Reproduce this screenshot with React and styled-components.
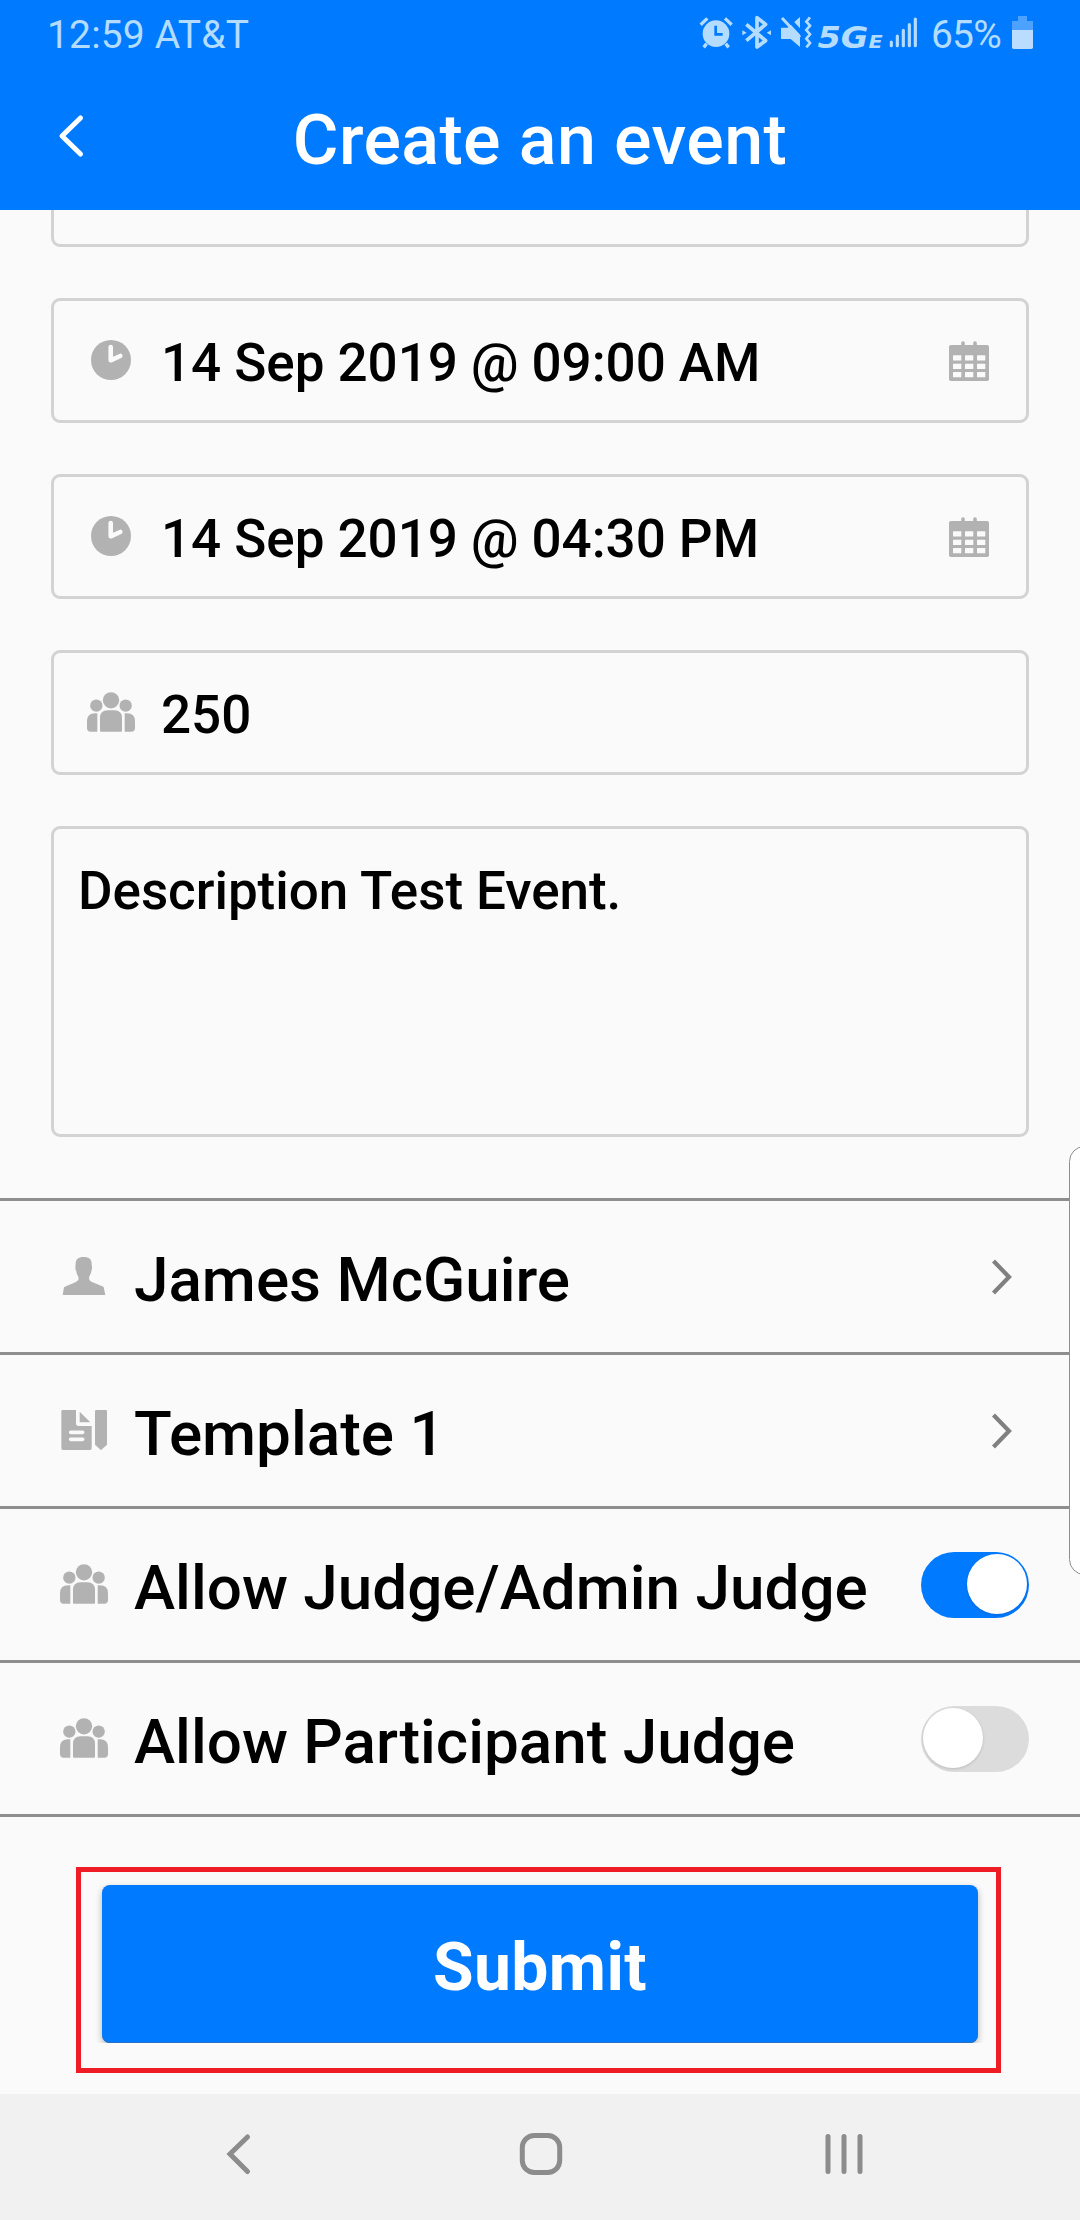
import React, { useState } from 'react';
import styled, { createGlobalStyle } from 'styled-components';

const GlobalStyle = createGlobalStyle`
  * {
    box-sizing: border-box;
  }
  body {
    margin: 0;
    background-color: #fafafa;
    font-family: Roboto, "Liberation Sans", sans-serif;
  }
`;

const Screen = styled.div`
  position: relative;
  display: flex;
  flex-direction: column;
  width: 1080px;
  height: 2220px;
  overflow: hidden;
  background-color: #fafafa;
  color: #000;
`;

const Header = styled.header`
  flex: none;
  height: 210px;
  background-color: #007aff;
  color: #fff;
`;

const StatusBar = styled.div`
  display: flex;
  justify-content: space-between;
  height: 70px;
  padding: 15px 47px 0 47px;
  color: #b3dcff;
  font-size: 39px;
  line-height: 41px;
  white-space: nowrap;

  svg {
    display: block;
    flex: none;
  }
`;

const Carrier = styled.span`
  letter-spacing: 0.15px;
`;

const StatusIcons = styled.div`
  display: flex;
  align-items: flex-start;

  .alarm {
    margin-right: 8px;
  }
  .bluetooth {
    margin-right: 7px;
  }
`;

const Network = styled.span`
  width: 76px;
  padding: 7px 0 0 4px;
  font: italic bold 30px/32px "DejaVu Sans", sans-serif;
  transform: scaleX(1.12);
  transform-origin: left;

  small {
    font-size: 18.5px;
  }
`;

const Percent = styled.span`
  width: 94px;
  padding-left: 13px;
  letter-spacing: -0.8px;
`;

const TitleBar = styled.div`
  display: grid;
  grid-template-columns: 140px 1fr 140px;
  align-items: center;
  height: 140px;
`;

const BackButton = styled.button`
  display: flex;
  padding: 0 0 8px 56px;
  border: 0;
  background: none;
  color: #fff;
`;

const Title = styled.h1`
  margin: 0;
  text-align: center;
  font-size: 70px;
  font-weight: 500;
  line-height: 84px;
  letter-spacing: 0.4px;
  white-space: nowrap;
`;

const Content = styled.main`
  flex: 1;
  min-height: 0;
  overflow: hidden;
`;

const Fields = styled.div`
  display: flex;
  flex-direction: column;
  gap: 51px;
  margin-top: -88px;
  padding: 0 51px;
`;

const Field = styled.div`
  display: flex;
  align-items: ${props => (props.$multiline ? 'flex-start' : 'center')};
  height: ${props => (props.$multiline ? '311px' : '125px')};
  padding: ${props => (props.$multiline ? '30px 24px' : '0 37px 0 33px')};
  border: 3px solid #d3d3d3;
  border-radius: 9px;
  font-size: 53px;
  font-weight: 500;
  line-height: 64px;
  letter-spacing: -0.05px;
  white-space: nowrap;

  svg {
    flex: none;
    color: #b2b2b2;
  }
  svg:first-child {
    margin-bottom: 1px;
  }
  svg:last-child {
    margin-top: 1px;
  }
`;

const FieldText = styled.span`
  flex: 1;
  padding: 5px 0 0 26px;
`;

const List = styled.div`
  margin-top: 61px;
  border-bottom: 3px solid #8e8e8e;
`;

const Row = styled.div`
  display: flex;
  align-items: center;
  height: 154px;
  padding: 0 51px 0 60px;
  border-top: 3px solid #8e8e8e;

  svg {
    flex: none;
    color: #b2b2b2;
  }
  svg:first-child {
    margin-bottom: 1px;
  }
  .chevron {
    margin-right: 15px;
    color: #808080;
  }
`;

const RowText = styled.span`
  flex: 1;
  padding: 6px 0 0 26px;
  font-size: 62px;
  font-weight: 500;
  line-height: 74px;
  white-space: nowrap;
`;

const Switch = styled.button`
  display: flex;
  justify-content: ${props => (props.$on ? 'flex-end' : 'flex-start')};
  width: 108px;
  height: 66px;
  margin-top: 1px;
  padding: 2px 2px 4px;
  border: 0;
  border-radius: 33px;
  background-color: ${props => (props.$on ? '#007aff' : '#dcdcdc')};
`;

const Knob = styled.span`
  width: 60px;
  height: 60px;
  border-radius: 50%;
  background-color: #fff;
  box-shadow: 0 1px 3px rgba(0, 0, 0, 0.15);
`;

const SubmitFrame = styled.div`
  width: 925px;
  height: 206px;
  margin: 50px 0 0 76px;
  padding: 13px 18px 25px 21px;
  border: 5px solid #ee1c24;
`;

const SubmitButton = styled.button`
  display: block;
  width: 100%;
  height: 158px;
  padding: 7px 0 0;
  border: 0;
  border-radius: 8px;
  background-color: #007aff;
  box-shadow: 0 3px 7px rgba(0, 0, 0, 0.28), inset 0 -1px 0 #2a70c4;
  clip-path: inset(-8px -16px 0 -16px);
  color: #fff;
  font-family: inherit;
  font-size: 66px;
  font-weight: 700;
  letter-spacing: 0.4px;
`;

const NavBar = styled.nav`
  display: flex;
  flex: none;
  align-items: center;
  justify-content: space-between;
  height: 126px;
  padding: 0 214px 6px 223px;
  background-color: #f1f1f1;
  color: #8c8c8c;

  .home {
    margin-left: 7px;
  }
`;

/* pull-out handle of the edge panel, cut off by the screen border */
const EdgeHandle = styled.div`
  position: absolute;
  top: 1146px;
  right: -20px;
  width: 31px;
  height: 429px;
  border: 1px solid #8e8e8e;
  border-radius: 16px;
  background-color: #fff;
`;

const AlarmIcon = () => (
  <svg className="alarm" width="35" height="35" viewBox="57 45 105 105">
    <g stroke="currentColor" strokeWidth="10" fill="none">
      <path d="M62 74L82 55M155 74L135 55" />
      <path d="M80 131L71 142M137 131L146 142" />
    </g>
    <circle cx="108" cy="101" r="40" fill="currentColor" />
    <path d="M107 77V103H128" fill="none" stroke="#007aff" strokeWidth="8" />
  </svg>
);

const BluetoothIcon = () => (
  <svg className="bluetooth" width="30" height="35" viewBox="186 45 90 105">
    <path d="M199 73L257 122L231 141V53L257 73L199 122" fill="none" stroke="currentColor" strokeWidth="11" strokeLinejoin="round" />
    <path d="M187 91L200 98L187 106ZM273 91L260 98L273 106Z" fill="currentColor" />
  </svg>
);

const MuteIcon = () => (
  <svg width="34" height="35" viewBox="297 45 102 105">
    <path d="M303 83H323L342 67L360 51V141L332 117H303Z" fill="currentColor" />
    <path d="M314 45L370 105" stroke="#007aff" strokeWidth="13" />
    <path d="M306 54L360 112" stroke="currentColor" strokeWidth="9" />
    <path d="M390 52L379 65L390 77L379 90L390 103L379 116L390 129L379 142" fill="none" stroke="currentColor" strokeWidth="8" />
  </svg>
);

const SignalIcon = () => (
  <svg width="29" height="35" viewBox="627 45 87 105">
    <path d="M634 126V137M652 108V137M670 91V137M688 74V137M706 57V137" stroke="currentColor" strokeWidth="9.5" strokeLinecap="round" />
  </svg>
);

const BatteryIcon = () => (
  <svg width="21" height="35" viewBox="996 45 63 105">
    <path d="M1014 48H1041V63H1059V90H996V63H1014Z" fill="#4da2ff" />
    <path d="M996 90H1059V142Q1059 147 1054 147H1001Q996 147 996 142Z" fill="#b9dcff" />
  </svg>
);

const ClockIcon = () => (
  <svg width="48" height="40" viewBox="-4 0 48 40">
    <circle cx="20" cy="20" r="20" fill="currentColor" />
    <path d="M19.7 7V20.3L29.3 16" fill="none" stroke="#fafafa" strokeWidth="4.6" strokeLinecap="round" strokeLinejoin="round" />
  </svg>
);

const CalendarIcon = () => (
  <svg width="40" height="40" viewBox="0 0 40 40">
    <path d="M14 2V8M26 2V8" stroke="currentColor" strokeWidth="3.6" strokeLinecap="round" />
    <rect y="4" width="40" height="36" rx="1.8" fill="currentColor" />
    <g fill="#fafafa">
      {[14.3, 22.8, 31].map(y => [4, 16, 28].map(x => (
        <rect key={`${x}-${y}`} x={x} y={y} width="8.3" height="5.2" rx="0.5" />
      )))}
    </g>
  </svg>
);

const PeopleIcon = () => (
  <svg width="48" height="40" viewBox="0 0 144 120" fill="currentColor">
    <circle cx="72" cy="25" r="24.5" />
    <circle cx="28" cy="41" r="18.5" />
    <circle cx="116" cy="41" r="18.5" />
    <path d="M39 117V78Q39 55 62 55H82Q105 55 105 78V117Q105 119 102 119H42Q39 119 39 117Z" />
    <path d="M31 64V119H11Q0 119 0 108V88Q0 64 24 64Z" />
    <path d="M113 64V119H133Q144 119 144 108V88Q144 64 120 64Z" />
  </svg>
);

const PersonIcon = () => (
  <svg width="48" height="38" viewBox="60 201 144 114">
    <path d="M131 201C148 201 155 208 155 222C156 230 157 237 154 244C153 253 147 258 147 265C148 274 157 277 165 280C176 284 183 288 191 291L196 315H68L72 292C83 286 91 284 101 279C110 275 116 273 116 265C115 258 110 254 109 244C105 237 106 230 107 222C107 208 114 201 131 201Z" fill="currentColor" />
  </svg>
);

const TemplateIcon = () => (
  <svg width="48" height="40" viewBox="60 660 144 120">
    <path d="M68 660H108V700Q108 708 116 708H155V775Q155 780 150 780H69Q64 780 64 775V664Q64 660 68 660Z" fill="currentColor" />
    <path d="M119 665L151 697H119Z" fill="currentColor" />
    <path d="M169 660H197Q201 660 201 664V764L186 778Q183 781 180 778L165 764V664Q165 660 169 660Z" fill="currentColor" />
    <path d="M92 727H128M92 748H128" stroke="#fafafa" strokeWidth="11" strokeLinecap="round" />
  </svg>
);

const ChevronIcon = () => (
  <svg className="chevron" width="24" height="36" viewBox="0 0 24 36">
    <path d="M3.5 2L19 18L3.5 34" fill="none" stroke="currentColor" strokeWidth="4.2" />
  </svg>
);

const dates = ['14 Sep 2019 @ 09:00 AM', '14 Sep 2019 @ 04:30 PM'];

function SwitchRow({ label, initial }) {
  const [on, setOn] = useState(initial);

  return (
    <Row>
      <PeopleIcon />
      <RowText>{label}</RowText>
      <Switch $on={on} role="switch" aria-checked={on} onClick={() => setOn(prev => !prev)}>
        <Knob />
      </Switch>
    </Row>
  );
}

function App() {
  return (
    <Screen>
      <GlobalStyle />
      <Header>
        <StatusBar>
          <Carrier>12:59 AT&amp;T</Carrier>
          <StatusIcons>
            <AlarmIcon />
            <BluetoothIcon />
            <MuteIcon />
            <Network>5G<small>E</small></Network>
            <SignalIcon />
            <Percent>65%</Percent>
            <BatteryIcon />
          </StatusIcons>
        </StatusBar>
        <TitleBar>
          <BackButton>
            <svg width="30" height="44" viewBox="0 0 30 44">
              <path d="M24.5 4L6 22L24.5 40" fill="none" stroke="currentColor" strokeWidth="5" strokeLinecap="round" strokeLinejoin="round" />
            </svg>
          </BackButton>
          <Title>Create an event</Title>
        </TitleBar>
      </Header>

      <Content>
        <Fields>
          <Field />
          {dates.map(date => (
            <Field key={date}>
              <ClockIcon />
              <FieldText>{date}</FieldText>
              <CalendarIcon />
            </Field>
          ))}
          <Field>
            <PeopleIcon />
            <FieldText>250</FieldText>
          </Field>
          <Field $multiline>Description Test Event.</Field>
        </Fields>

        <List>
          <Row>
            <PersonIcon />
            <RowText>James McGuire</RowText>
            <ChevronIcon />
          </Row>
          <Row>
            <TemplateIcon />
            <RowText>Template 1</RowText>
            <ChevronIcon />
          </Row>
          <SwitchRow label="Allow Judge/Admin Judge" initial={true} />
          <SwitchRow label="Allow Participant Judge" initial={false} />
        </List>

        <SubmitFrame>
          <SubmitButton>Submit</SubmitButton>
        </SubmitFrame>
      </Content>

      <NavBar>
        <svg width="30" height="44" viewBox="0 0 30 44">
          <path d="M24.5 5L7 22L24.5 39.5" fill="none" stroke="currentColor" strokeWidth="5" strokeLinecap="round" />
        </svg>
        <svg className="home" width="44" height="44" viewBox="0 0 44 44">
          <rect x="3.3" y="3.5" width="37.4" height="37" rx="12" fill="none" stroke="currentColor" strokeWidth="5" />
        </svg>
        <svg width="44" height="44" viewBox="0 0 44 44">
          <path d="M6 4.5V39.5M22 4.5V39.5M38 4.5V39.5" stroke="currentColor" strokeWidth="5" strokeLinecap="round" />
        </svg>
      </NavBar>

      <EdgeHandle />
    </Screen>
  );
}

export default App;
